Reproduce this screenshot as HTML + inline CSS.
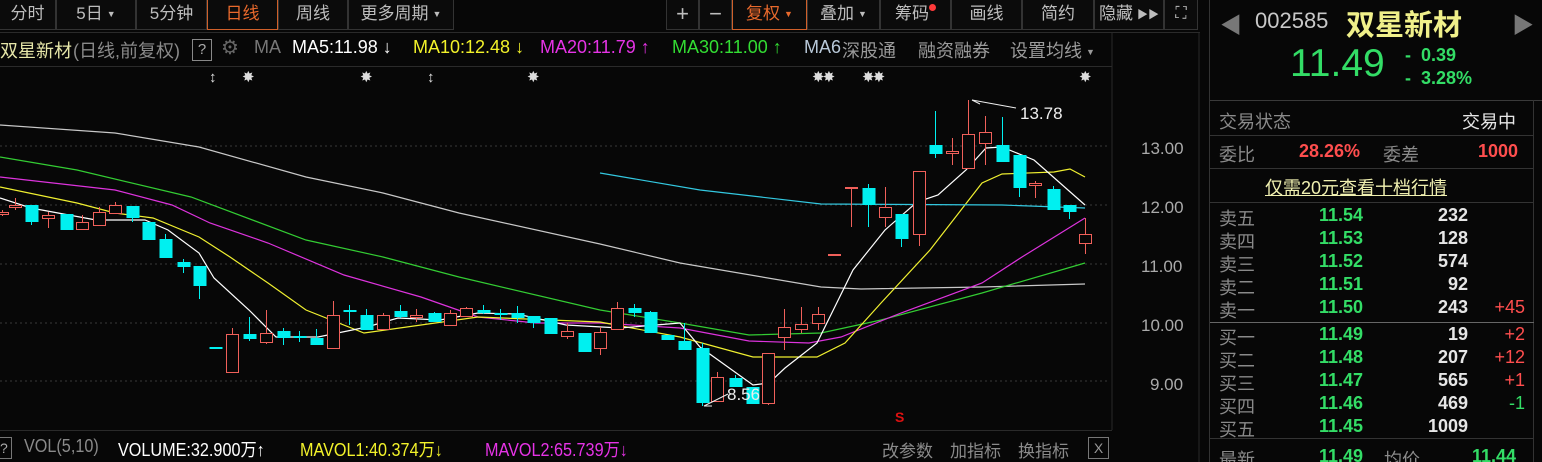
<!DOCTYPE html>
<html><head><meta charset="utf-8"><style>
*{margin:0;padding:0;box-sizing:border-box}
html,body{width:1542px;height:462px;overflow:hidden}
body{background:#070707;position:relative;font-family:"Liberation Sans","Noto Sans CJK SC",sans-serif;color:#c8c8c8}
.a{position:absolute;white-space:nowrap}
.btn{position:absolute;top:0;height:30px;border:1px solid #333;border-top:none;font-size:17px;color:#bdbdbd;text-align:center;line-height:28px;background:#0b0b0b}
.tri{font-size:9px;vertical-align:2px;margin-left:4px}
.r2{top:37px;font-size:18px}
.ob{font-size:18px;font-weight:bold}
.lab{color:#8a8a8a;font-size:18px}
.g{color:#33dd66}.w{color:#e6e6e6}.rd{color:#ff4e4e}
.bt{top:436px;font-size:18px;transform:scaleX(0.9);transform-origin:0 0}
</style></head><body>
<div class="btn" style="left:0;width:56px;border-left:none">分时</div>
<div class="btn" style="left:56px;width:80px">5日<span class="tri">▼</span></div>
<div class="btn" style="left:136px;width:71px">5分钟</div>
<div class="btn" style="left:207px;width:71px;color:#e8692c;border:1px solid #d0602a;border-top:none">日线</div>
<div class="btn" style="left:278px;width:70px">周线</div>
<div class="btn" style="left:348px;width:106px">更多周期<span class="tri">▼</span></div>
<div class="btn" style="left:666px;width:33px;font-size:22px">+</div>
<div class="btn" style="left:699px;width:33px;font-size:22px">−</div>
<div class="btn" style="left:732px;width:75px;color:#e8692c;border:1px solid #d0602a;border-top:none">复权<span class="tri" style="color:#e8692c">▼</span></div>
<div class="btn" style="left:807px;width:73px">叠加<span class="tri">▼</span></div>
<div class="btn" style="left:880px;width:71px">筹码<span style="display:inline-block;width:7px;height:7px;border-radius:50%;background:#ff3a3a;vertical-align:8px"></span></div>
<div class="btn" style="left:951px;width:71px">画线</div>
<div class="btn" style="left:1022px;width:72px">简约</div>
<div class="btn" style="left:1094px;width:70px">隐藏<span style="font-size:11px;vertical-align:1px;margin-left:4px">▶▶</span></div>
<div class="btn" style="left:1164px;width:34px;font-size:16px">⛶</div>
<div class="a" style="left:0;top:32px;width:1200px;height:1px;background:#2a2a2a"></div>
<div class="a" style="left:0;top:66px;width:1112px;height:1px;background:#2a2a2a"></div>
<div class="a r2" style="left:0;color:#e6e6a8">双星新材</div>
<div class="a r2" style="left:73px;color:#8a8a8a">(日线,前复权)</div>
<div class="a" style="left:192px;top:39px;width:20px;height:22px;border:1px solid #888;color:#aaa;font-size:15px;text-align:center;line-height:20px">?</div>
<div class="a r2" style="left:221px;color:#666;font-size:20px;top:35px">⚙</div>
<div class="a r2" style="left:254px;color:#777">MA</div>
<div class="a r2" style="left:292px;color:#fff">MA5:11.98 ↓</div>
<div class="a r2" style="left:413px;color:#f2f22a">MA10:12.48 ↓</div>
<div class="a r2" style="left:540px;color:#e633e6">MA20:11.79 ↑</div>
<div class="a r2" style="left:672px;color:#33dd33">MA30:11.00 ↑</div>
<div class="a r2" style="left:804px;color:#b8c8d8">MA6</div>
<div class="a r2" style="left:842px;color:#9a9a9a">深股通</div>
<div class="a r2" style="left:918px;color:#9a9a9a">融资融券</div>
<div class="a r2" style="left:1010px;color:#9a9a9a">设置均线<span class="tri">▼</span></div>
<div class="a" style="top:69px;left:209px;font-size:15px;color:#ddd;font-weight:bold">↕</div>
<div class="a" style="top:68px;left:242px;font-size:15px;color:#ddd">✸</div>
<div class="a" style="top:68px;left:360px;font-size:15px;color:#ddd">✸</div>
<div class="a" style="top:69px;left:427px;font-size:15px;color:#ddd;font-weight:bold">↕</div>
<div class="a" style="top:68px;left:527px;font-size:15px;color:#ddd">✸</div>
<div class="a" style="top:68px;left:812px;font-size:15px;color:#ddd;letter-spacing:-2px">✸✸</div>
<div class="a" style="top:68px;left:862px;font-size:15px;color:#ddd;letter-spacing:-2px">✸✸</div>
<div class="a" style="top:68px;left:1079px;font-size:15px;color:#ddd">✸</div>
<svg class="a" style="left:0;top:0" width="1210" height="462">
<g stroke="#3a3a3a" stroke-dasharray="2,3" stroke-width="1">
<line x1="0" y1="146" x2="1110" y2="146"/><line x1="0" y1="205" x2="1110" y2="205"/><line x1="0" y1="264" x2="1110" y2="264"/><line x1="0" y1="323" x2="1110" y2="323"/><line x1="0" y1="381" x2="1110" y2="381"/></g>
<line x1="1112" y1="33" x2="1112" y2="430" stroke="#2a2a2a"/>
<line x1="1199" y1="33" x2="1199" y2="462" stroke="#2a2a2a"/>
<g fill="none" stroke-width="1.2">
<polyline stroke="#c8c8c8" points="0,125 115,133 199,147 306,177 383,193 459,213 600,244 680,263 821,287 861,289 982,287 1085,284"/>
<polyline stroke="#33cc33" points="0,157 77,170 191,197 306,240 383,257 459,277 600,310 680,323 749,335 821,333 881,320 982,293 1085,263"/>
<polyline stroke="#dd33dd" points="0,177 115,190 172,205 210,223 268,243 344,275 421,297 478,317 536,323 600,323 680,328 749,341 809,343 841,337 901,313 982,283 1022,257 1085,218"/>
<polyline stroke="#f0f030" points="0,187 77,203 115,213 153,218 199,237 230,257 268,283 306,310 364,333 421,325 478,317 600,322 680,337 753,357 817,357 845,343 881,303 930,250 982,183 1002,174 1054,172 1070,169 1085,177"/>
<polyline stroke="#ffffff" points="0,198 31,208 96,220 145,220 168,230 199,253 214,278 249,310 276,337 318,337 367,327 398,318 440,320 478,313 517,314 566,325 620,328 680,323 700,347 753,385 769,383 785,368 817,343 853,270 885,230 917,202 938,195 966,170 986,148 1002,147 1034,160 1085,205"/>
<polyline stroke="#33c8e0" points="600,173 700,190 821,204 1002,205 1085,208"/>
</g>
<g id="c"></g>
<text x="1020" y="119" fill="#eee" font-size="17" font-family="Liberation Sans">13.78</text>
<polyline points="1016,108 972,100" fill="none" stroke="#eee"/>
<line x1="972" y1="100" x2="980" y2="104" stroke="#eee"/>
<text x="727" y="400" fill="#eee" font-size="17" font-family="Liberation Sans">8.56</text>
<polyline points="728,394 704,406 712,406" fill="none" stroke="#eee"/>
<text x="895" y="422" fill="#dd1111" font-size="14" font-weight="bold" font-family="Liberation Sans">S</text>
<g fill="#aaa" font-size="17" font-family="Liberation Sans">
<text x="1141" y="154">13.00</text><text x="1141" y="213">12.00</text><text x="1141" y="272">11.00</text><text x="1141" y="331">10.00</text><text x="1150" y="390">9.00</text></g>
</svg>
<script>
var d=[[2,212,214,210,216,1],[15,205,207,198,210,1],[31,205,221,205,225,0],[48,215,218,212,228,1],[66,214,229,214,230,0],[82,222,229,215,230,1],[99,212,225,207,226,1],[115,205,213,202,214,1],[132,206,217,206,222,0],[148,222,239,222,239,0],[165,239,257,234,258,0],[183,262,266,259,273,0],[199,266,285,266,299,0],[215,347,348,347,348,0],[232,334,372,328,372,1],[249,334,338,317,341,0],[266,333,342,310,344,1],[283,331,337,328,345,0],[299,336,337,331,342,0],[316,338,344,329,345,0],[333,315,348,301,348,1],[349,310,311,305,325,0],[366,315,329,309,330,0],[383,315,329,313,330,1],[400,311,316,305,318,0],[416,315,317,309,322,1],[434,313,321,312,322,0],[450,313,325,310,326,1],[466,308,316,307,317,1],[483,310,312,305,314,0],[500,313,314,309,320,0],[517,313,317,306,323,0],[533,316,322,316,328,0],[550,318,333,318,334,0],[567,331,336,323,339,1],[584,333,351,333,352,0],[600,332,348,327,355,1],[617,308,329,302,330,1],[634,308,312,304,317,0],[650,312,332,311,333,0],[667,335,339,335,340,0],[684,341,349,323,349,0],[702,348,402,343,406,0],[717,377,401,372,402,1],[735,378,386,375,387,0],[752,387,403,387,404,0],[768,353,403,353,405,1],[784,327,337,309,350,1],[801,324,329,307,333,1],[818,314,323,307,330,1],[834,254,255,254,255,1],[851,187,188,187,227,1],[868,188,204,184,227,0],[885,207,217,187,227,1],[901,214,238,214,247,0],[919,171,234,171,246,1],[935,145,153,111,158,0],[952,151,153,138,165,1],[968,134,168,100,168,1],[985,132,143,116,165,1],[1002,145,161,117,161,0],[1019,155,187,155,197,0],[1035,183,185,181,198,1],[1053,189,209,186,209,0],[1069,205,211,205,219,0],[1085,234,243,218,254,1]];
var s='';
d.forEach(function(c){var x=c[0],col=c[5]?'#f0605a':'#00f0f0';
s+='<line x1="'+(x+.5)+'" y1="'+c[3]+'" x2="'+(x+.5)+'" y2="'+c[4]+'" stroke="'+col+'"/>';
var h=Math.max(1,c[2]-c[1]);
if(c[5])s+='<rect x="'+(x-5.5)+'" y="'+(c[1]+.5)+'" width="12" height="'+h+'" fill="#070707" stroke="'+col+'"/>';
else s+='<rect x="'+(x-5.5)+'" y="'+c[1]+'" width="13" height="'+(h+1)+'" fill="'+col+'"/>';});
document.getElementById('c').innerHTML=s;
</script>
<div class="a" style="left:0;top:430px;width:1112px;height:1px;background:#2a2a2a"></div>
<div class="a" style="left:0;top:437px;width:12px;height:22px;border:1px solid #777;border-left:none;color:#aaa;font-size:14px;line-height:20px">?</div>
<div class="a bt" style="left:24px;color:#8a8a8a">VOL(5,10)</div>
<div class="a bt" style="left:118px;color:#fff">VOLUME:32.900万↑</div>
<div class="a bt" style="left:300px;color:#f2f22a">MAVOL1:40.374万↓</div>
<div class="a bt" style="left:485px;color:#e633e6">MAVOL2:65.739万↓</div>
<div class="a" style="left:882px;top:437px;font-size:17px;color:#8a8a8a">改参数</div>
<div class="a" style="left:950px;top:437px;font-size:17px;color:#8a8a8a">加指标</div>
<div class="a" style="left:1018px;top:437px;font-size:17px;color:#8a8a8a">换指标</div>
<div class="a" style="left:1088px;top:437px;width:21px;height:22px;border:1px solid #777;color:#999;font-size:14px;text-align:center;line-height:20px">X</div>
<div class="a" style="left:1209px;top:0;width:1px;height:462px;background:#333"></div>
<div class="a" style="left:1220px;top:8px;font-size:22px;color:#777">◀</div>
<div class="a" style="left:1255px;top:8px;font-size:22px;color:#c8c8c8">002585</div>
<div class="a" style="left:1346px;top:2px;font-size:29px;color:#f0f08a;font-weight:bold">双星新材</div>
<div class="a" style="left:1512px;top:8px;font-size:22px;color:#777">▶</div>
<div class="a g" style="left:1290px;top:42px;font-size:39px">11.49</div>
<div class="a g" style="left:1405px;top:45px;font-size:18px;font-weight:bold">-&nbsp; 0.39</div>
<div class="a g" style="left:1405px;top:68px;font-size:18px;font-weight:bold">-&nbsp; 3.28%</div>
<div class="a" style="left:1210px;top:100px;width:332px;height:1px;background:#3a3a3a"></div>
<div class="a lab" style="left:1219px;top:108px">交易状态</div>
<div class="a w" style="left:1462px;top:108px;font-size:18px">交易中</div>
<div class="a" style="left:1210px;top:135px;width:324px;height:1px;background:#333"></div>
<div class="a" style="left:1533px;top:100px;width:1px;height:362px;background:#333"></div>
<div class="a lab" style="left:1219px;top:141px">委比</div>
<div class="a rd ob" style="left:1299px;top:141px">28.26%</div>
<div class="a lab" style="left:1383px;top:141px">委差</div>
<div class="a rd ob" style="left:1478px;top:141px">1000</div>
<div class="a" style="left:1210px;top:168px;width:324px;height:1px;background:#333"></div>
<div class="a" style="left:1265px;top:174px;font-size:18px;color:#f0f0b0;text-decoration:underline">仅需20元查看十档行情</div>
<div class="a" style="left:1210px;top:202px;width:324px;height:1px;background:#333"></div>
<div class="a" style="left:1210px;top:322px;width:324px;height:1px;background:#666"></div>
<div class="a" style="left:1210px;top:438px;width:324px;height:1px;background:#333"></div>
<div id="ob"></div>
<script>
var r=[['卖五','11.54','232',''],['卖四','11.53','128',''],['卖三','11.52','574',''],['卖二','11.51','92',''],['卖一','11.50','243','+45'],['买一','11.49','19','+2'],['买二','11.48','207','+12'],['买三','11.47','565','+1'],['买四','11.46','469','-1'],['买五','11.45','1009','']];
var h='';r.forEach(function(e,i){var y=205+i*23+(i>4?4:0);
h+='<div class="a lab" style="left:1219px;top:'+y+'px">'+e[0]+'</div><div class="a g ob" style="left:1319px;top:'+y+'px">'+e[1]+'</div><div class="a w ob" style="right:74px;top:'+y+'px">'+e[2]+'</div>';
if(e[3])h+='<div class="a" style="right:17px;top:'+y+'px;font-size:18px;color:'+(e[3][0]=='-'?'#33dd66':'#ff4e4e')+'">'+e[3]+'</div>';});
h+='<div class="a lab" style="left:1219px;top:446px">最新</div><div class="a g ob" style="left:1319px;top:446px">11.49</div><div class="a lab" style="left:1384px;top:446px">均价</div><div class="a g ob" style="left:1472px;top:446px">11.44</div>';
document.getElementById('ob').innerHTML=h;
</script>
</body></html>
